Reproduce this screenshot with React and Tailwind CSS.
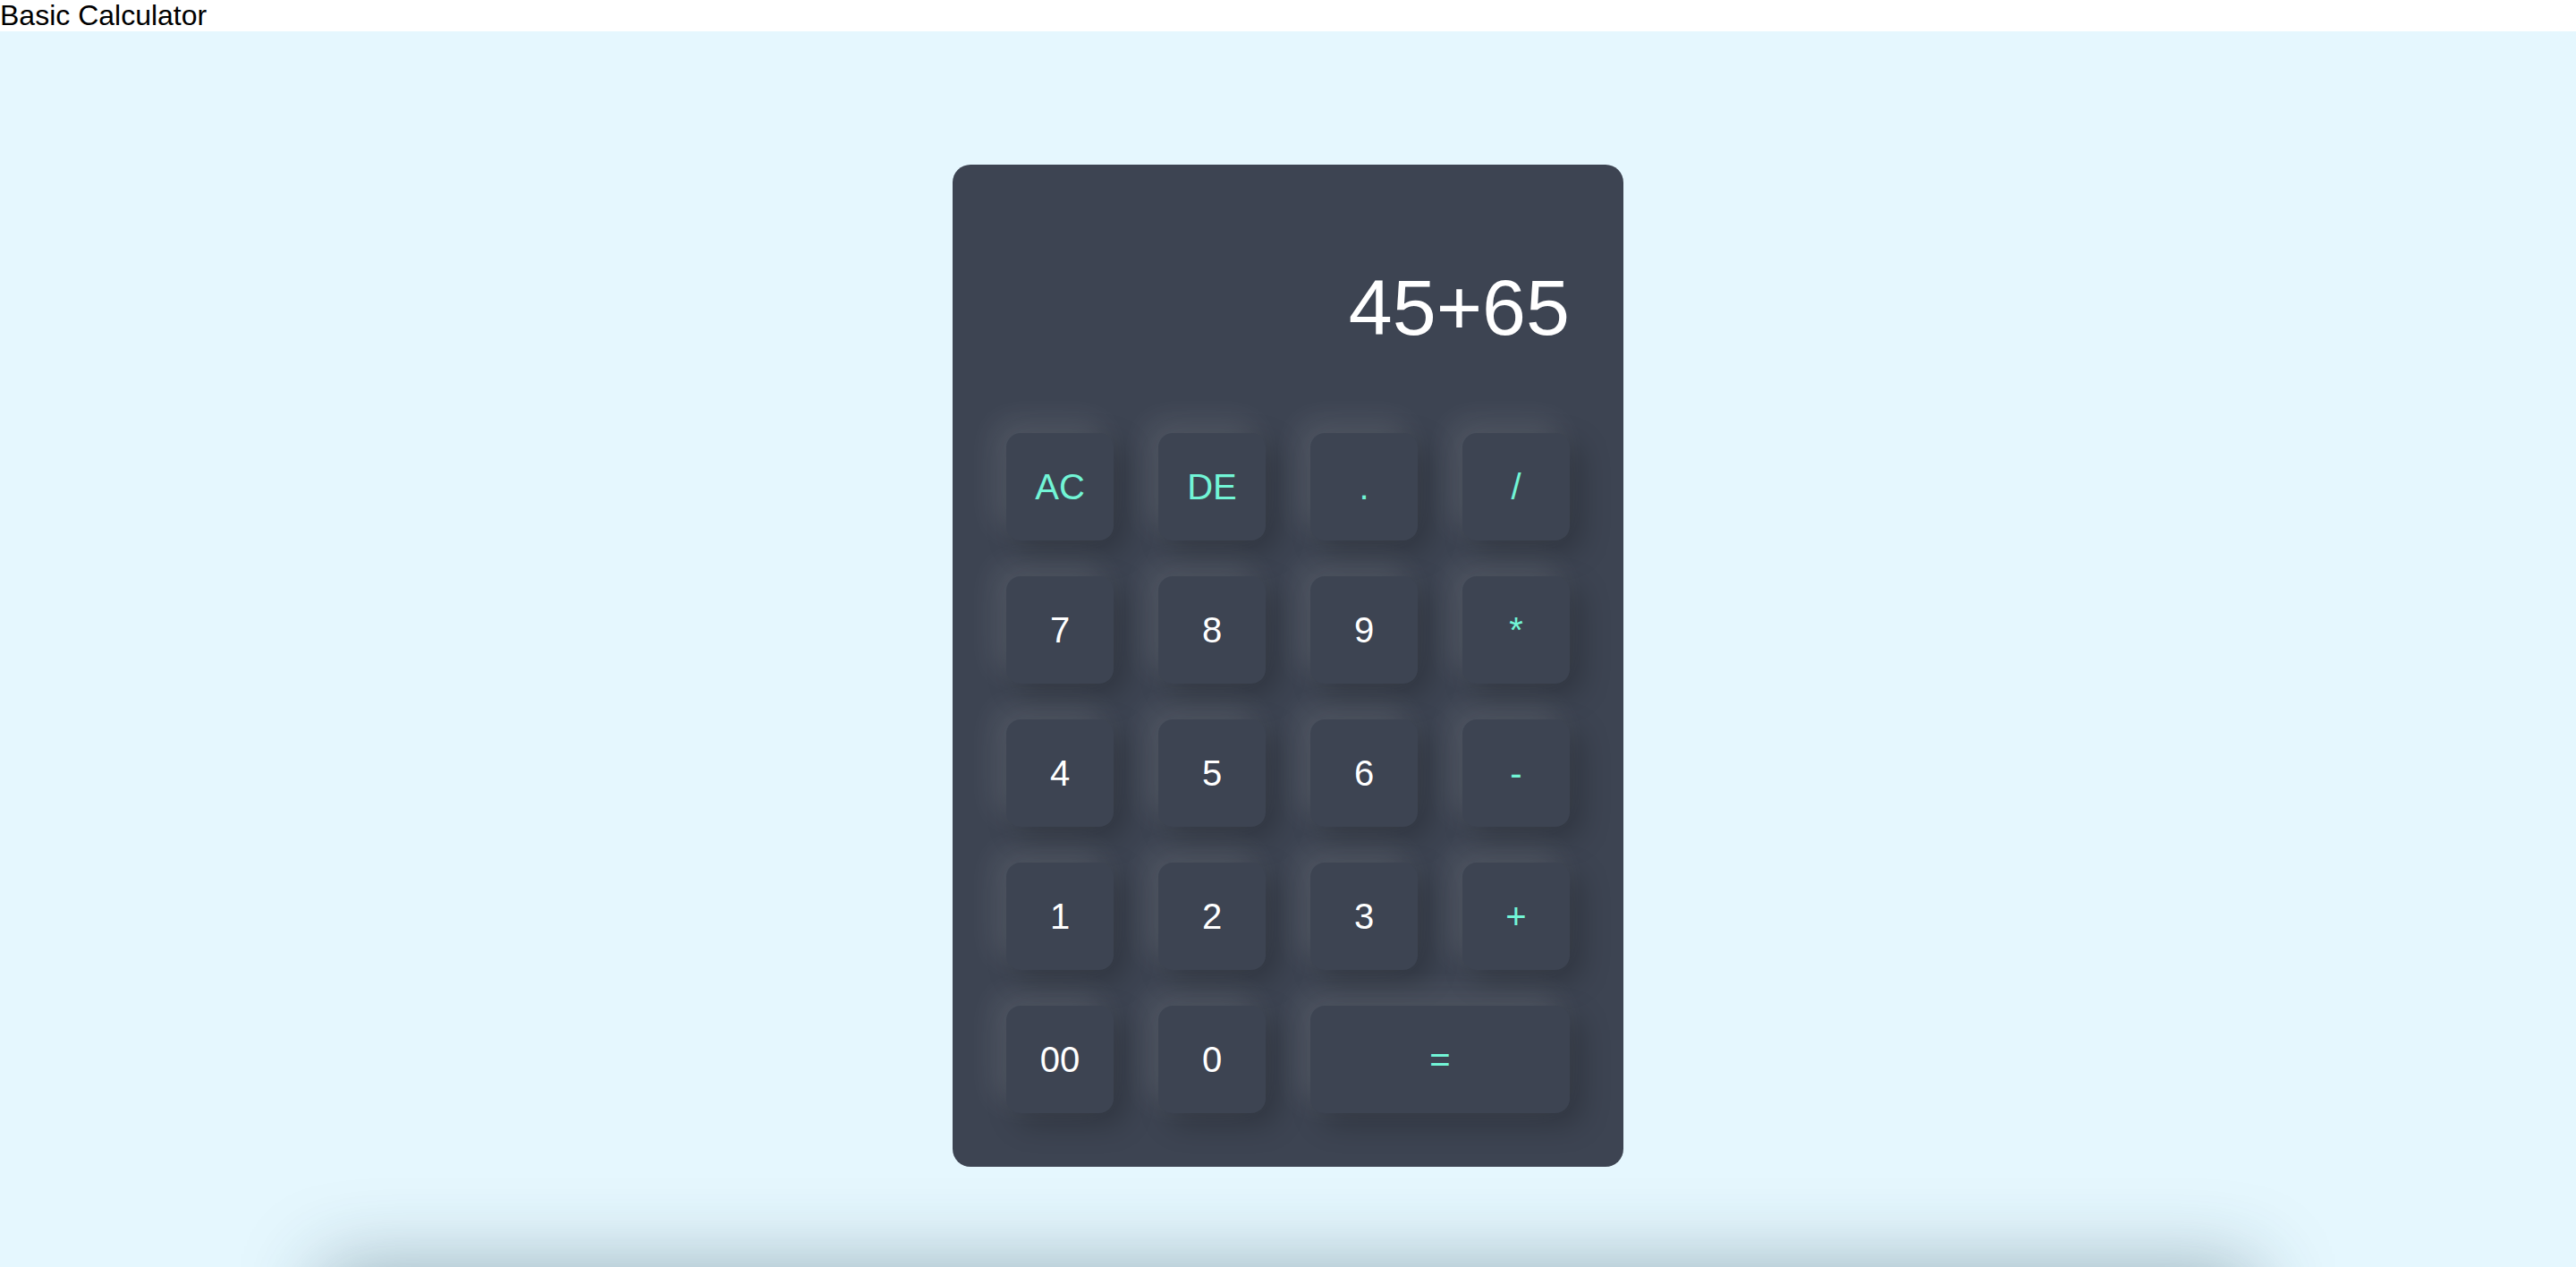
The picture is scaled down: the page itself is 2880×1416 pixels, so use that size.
const keys = [
  { label: "AC", accent: true },
  { label: "DE", accent: true },
  { label: ".", accent: true },
  { label: "/", accent: true },
  { label: "7" },
  { label: "8" },
  { label: "9" },
  { label: "*", accent: true },
  { label: "4" },
  { label: "5" },
  { label: "6" },
  { label: "-", accent: true },
  { label: "1" },
  { label: "2" },
  { label: "3" },
  { label: "+", accent: true },
  { label: "00" },
  { label: "0" },
  { label: "=", accent: true, wide: true },
];

export default function App() {
  return (
    <div className="h-[1416px] overflow-hidden font-['Liberation_Sans',Arial,sans-serif] text-black">
      <p className="text-[32px] leading-[35px]">Basic Calculator</p>
      <section className="h-[1381px] bg-[#e5f7fe] flex justify-center pt-[149px]">
        <Calculator display="45+65" />
      </section>
      <div className="w-[2160px] h-[200px] mx-auto shadow-[0_0_90px_rgba(30,60,75,0.38)]" />
    </div>
  );
}

function Calculator({ display }) {
  return (
    <div className="w-[750px] h-[1120px] bg-[#3d4452] rounded-[20px] p-[60px] flex flex-col">
      <div className="h-[241px] pt-[49px] text-right text-white text-[88px] leading-[101px]">
        {display}
      </div>
      <div className="grid grid-cols-4 gap-x-[50px] gap-y-[40px]">
        {keys.map((k) => (
          <Key key={k.label} label={k.label} accent={k.accent} wide={k.wide} />
        ))}
      </div>
    </div>
  );
}

function Key({ label, accent, wide }) {
  return (
    <button
      className={
        "h-[120px] rounded-[16px] bg-[#3d4452] flex items-center justify-center text-[40px] shadow-[-12px_-12px_34px_rgba(255,255,255,0.11),12px_12px_34px_rgba(0,0,0,0.24)] " +
        (accent ? "text-[#72f5d6] " : "text-white ") +
        (wide ? "col-span-2" : "")
      }
    >
      {label}
    </button>
  );
}
